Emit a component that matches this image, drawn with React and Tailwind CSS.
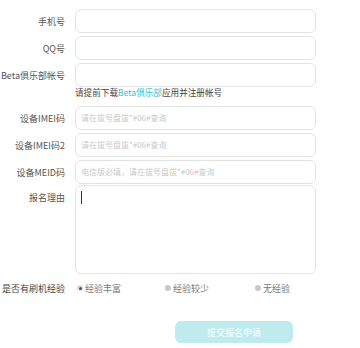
export default function App() {
  const font = { fontFamily: '"Noto Sans CJK SC", "Noto Sans", sans-serif' };
  const Label = ({ children, top }) => (
    <div className={`w-[65px] shrink-0 text-right text-[9px] leading-none text-[#555] ${top ? "pt-[8px]" : ""}`}>{children}</div>
  );
  const Input = ({ placeholder }) => (
    <div className="w-[241px] h-[24px] rounded-[6px] border border-[#e3e3e3] bg-white flex items-center pl-[5px] text-[8px] text-[#c9c9c9] leading-none">
      {placeholder}
    </div>
  );
  const Row = ({ label, placeholder, mt }) => (
    <div className={`flex items-center gap-[10px] ${mt}`}>
      <Label>{label}</Label>
      <Input placeholder={placeholder} />
    </div>
  );
  return (
    <div className="w-[360px] h-[348px] bg-white overflow-hidden" style={font}>
      <div className="pt-[9px] flex flex-col">
        <Row label="手机号" mt="" />
        <Row label="QQ号" mt="mt-[3px]" />
        <Row label="Beta俱乐部帐号" mt="mt-[3px]" />
        <div className="flex gap-[10px] h-[19px]">
          <div className="w-[65px] shrink-0" />
          <div className="text-[8.6px] leading-[11px] pt-[0px] text-[#444]">
            请提前下载<span className="text-[#35c0cf]">Beta俱乐部</span>应用并注册帐号
          </div>
        </div>
        <Row label="设备IMEI码" placeholder="请在拔号盘拔*#06#查询" mt="" />
        <Row label="设备IMEI码2" placeholder="请在拔号盘拔*#06#查询" mt="mt-[3px]" />
        <Row label="设备MEID码" placeholder="电信版必填，请在拔号盘拔*#06#查询" mt="mt-[3px]" />
        <div className="flex items-start gap-[10px] mt-[1px]">
          <Label top>报名理由</Label>
          <div className="w-[241px] h-[89px] rounded-[6px] border border-[#e3e3e3] bg-white pl-[5px] pt-[5px]">
            <div className="w-[1px] h-[13px] bg-[#333]" />
          </div>
        </div>
        <div className="flex items-center gap-[10px] mt-[8px] h-[12px]">
          <div className="w-[65px] shrink-0 text-right text-[9px] leading-none text-[#444]">是否有刷机经验</div>
          <div className="flex items-center text-[9px] leading-none text-[#777]">
            <div className="flex items-center w-[90px] pl-[2px]">
              <span className="w-[6px] h-[6px] rounded-full bg-[#ddd] flex items-center justify-center mr-[2px]">
                <span className="w-[3px] h-[3px] rounded-full bg-[#555]" />
              </span>
              经验丰富
            </div>
            <div className="flex items-center w-[90px]">
              <span className="w-[6px] h-[6px] rounded-full bg-[#c8c8c8] mr-[2px]" />
              经验较少
            </div>
            <div className="flex items-center">
              <span className="w-[6px] h-[6px] rounded-full bg-[#c8c8c8] mr-[2px]" />
              无经验
            </div>
          </div>
        </div>
        <div className="ml-[175px] mt-[27px] w-[118px] h-[22px] rounded-[6px] bg-[#bfeaee] flex items-center justify-center text-[9px] text-white leading-none">
          提交报名申请
        </div>
      </div>
    </div>
  );
}
